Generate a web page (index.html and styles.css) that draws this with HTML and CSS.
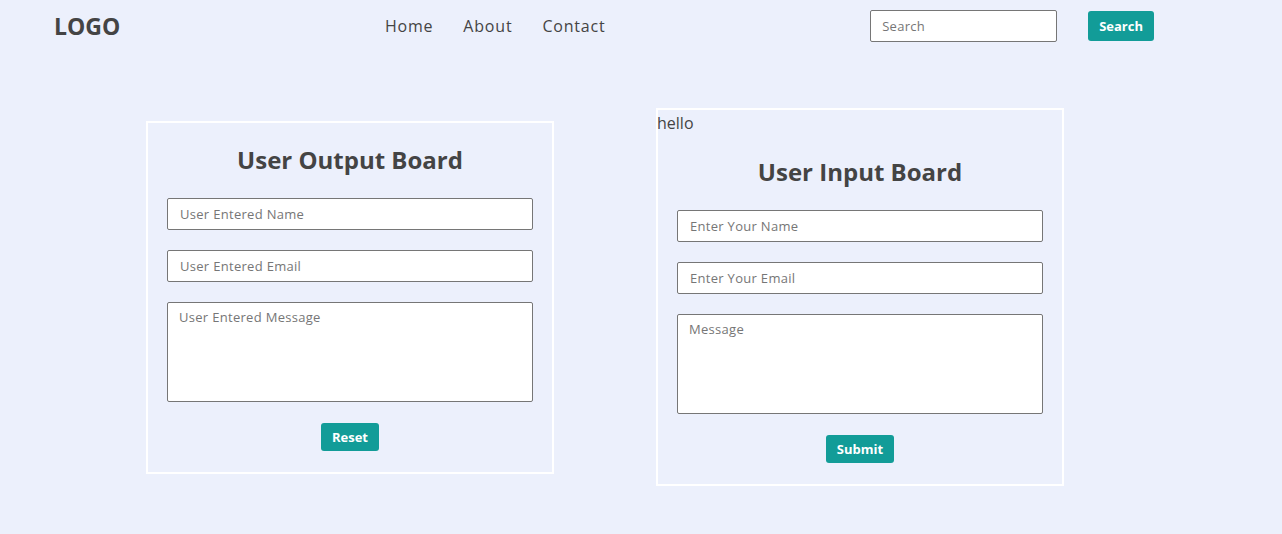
FILE: index.html
```html
<!DOCTYPE html>
<html lang="en">
<head>
<meta charset="utf-8">
<title>User Boards</title>
<link rel="stylesheet" href="styles.css">
</head>
<body>
<nav class="navbar">
  <div class="logo">LOGO</div>
  <ul class="nav-links">
    <li><a href="#">Home</a></li>
    <li><a href="#">About</a></li>
    <li><a href="#">Contact</a></li>
  </ul>
  <form class="search-form">
    <input class="search-input" type="text" placeholder="Search">
    <button class="btn search-btn" type="button">Search</button>
  </form>
</nav>
<main class="boards">
  <section class="card">
    <h2 class="card-title">User Output Board</h2>
    <input class="field" type="text" placeholder="User Entered Name">
    <input class="field" type="text" placeholder="User Entered Email">
    <textarea class="field area" placeholder="User Entered Message"></textarea>
    <button class="btn action-btn" type="button">Reset</button>
  </section>
  <section class="card">
    <div class="hello">hello</div>
    <h2 class="card-title">User Input Board</h2>
    <input class="field" type="text" placeholder="Enter Your Name">
    <input class="field" type="text" placeholder="Enter Your Email">
    <textarea class="field area" placeholder="Message"></textarea>
    <button class="btn action-btn" type="button">Submit</button>
  </section>
</main>
</body>
</html>
```
FILE: styles.css
```css
* { box-sizing: border-box; }

body {
  margin: 0;
  background: #ecf0fc;
  font-family: "Open Sans", "DejaVu Sans", sans-serif;
  color: #444;
}

.navbar {
  height: 51px;
  display: flex;
  align-items: center;
  justify-content: space-between;
  padding: 0 128px 0 54px;
}

.logo {
  font-size: 23px;
  font-weight: 700;
  color: #444;
}

.nav-links {
  display: flex;
  gap: 30px;
  list-style: none;
  margin: 0;
  padding: 0;
}

.nav-links a {
  text-decoration: none;
  color: #444;
  font-size: 16px;
  letter-spacing: 0.8px;
}

.search-form {
  display: flex;
  align-items: center;
  gap: 31px;
}

.search-input {
  width: 187px;
  height: 32px;
  border: 1px solid #767676;
  border-radius: 2px;
  padding: 0 11px;
  font-family: inherit;
  font-size: 13px;
  letter-spacing: 0.3px;
  background: #fff;
}

.btn {
  background: #129c98;
  color: #fff;
  border: none;
  border-radius: 3px;
  font-family: inherit;
  font-weight: 700;
  font-size: 13px;
  padding: 0 11px;
}

.search-btn { height: 30px; }

.boards {
  height: 483px;
  padding: 9px 0 0 146px;
  display: flex;
  align-items: center;
  gap: 102px;
}

.card {
  width: 408px;
  border: 2px solid #fff;
  padding: 1px 19px 21px;
  display: flex;
  flex-direction: column;
  align-items: center;
}

.hello {
  align-self: flex-start;
  margin-left: -20px;
  font-size: 16px;
  line-height: 25px;
}

.card-title {
  margin: 18px 0 20px;
  font-size: 24px;
  line-height: 36px;
  font-weight: 700;
}

.field {
  width: 366px;
  height: 32px;
  border: 1px solid #767676;
  border-radius: 2px;
  padding: 0 12px;
  font-family: inherit;
  font-size: 13px;
  letter-spacing: 0.3px;
  background: #fff;
  margin-bottom: 20px;
}

.area {
  height: 100px;
  padding: 5px 11px;
  resize: none;
  margin-bottom: 21px;
}

.field::placeholder, .search-input::placeholder { color: #767676; }

.action-btn { height: 28px; }
```
